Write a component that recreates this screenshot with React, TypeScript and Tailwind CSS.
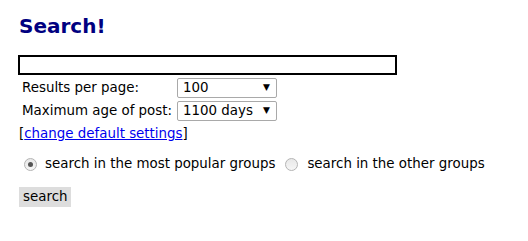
import { useState } from 'react'

const font = { fontFamily: '"DejaVu Sans", Verdana, sans-serif' }

const FakeSelect = ({ value }: { value: string }) => (
  <div className="flex items-center justify-between w-[100px] h-[20px] border border-[#a9a9a9] rounded-[2px] bg-white pl-[5px] pr-[6px] text-[13.4px] text-black">
    <span>{value}</span>
    <span className="text-[9px]">▼</span>
  </div>
)

const Radio = ({ checked, onClick }: { checked: boolean; onClick: () => void }) => (
  <span
    onClick={onClick}
    className="flex items-center justify-center w-[13px] h-[13px] rounded-full border border-[#b4b4b4] bg-gradient-to-b from-[#e8e8e8] to-[#f6f6f6] shrink-0"
  >
    {checked && <span className="w-[5px] h-[5px] rounded-full bg-[#555]" />}
  </span>
)

export const App = () => {
  const [query, setQuery] = useState<string>('')
  const [popular, setPopular] = useState<boolean>(true)

  return (
    <div className="w-[528px] h-[241px] bg-white px-[18px] pt-[14px] text-black" style={font}>
      <h1 className="text-[20px] leading-[24px] font-bold text-[#000080] pl-[1px]">Search!</h1>

      <input
        className="block mt-[17px] w-[379px] h-[20px] border-2 border-black outline-none px-1 text-[13px]"
        value={query}
        onChange={(e) => {
          setQuery(e.target.value)
        }}
      />

      <div className="grid grid-cols-[159px_auto] gap-y-[3px] mt-[3px] text-[13.4px] items-center">
        <span className="pl-[4px]">Results per page:</span>
        <FakeSelect value="100" />
        <span className="pl-[4px]">Maximum age of post:</span>
        <FakeSelect value="1100 days" />
      </div>

      {/* 設定リンク */}
      <p className="mt-[5px] pl-[1px] text-[13.4px] leading-[16px]">
        [<a href="#" className="text-[#0000ee] underline">change default settings</a>]
      </p>

      <div className="flex items-center mt-[14px] text-[13.4px] leading-[16px]">
        <span className="ml-[6px]">
          <Radio checked={popular} onClick={() => setPopular(true)} />
        </span>
        <span className="ml-[8px]">search in the most popular groups</span>
        <span className="ml-[10px]">
          <Radio checked={!popular} onClick={() => setPopular(false)} />
        </span>
        <span className="ml-[9px]">search in the other groups</span>
      </div>

      <button className="block mt-[15px] ml-[1px] h-[20px] px-[4px] bg-[#dddddd] text-[13.4px] leading-[20px]">
        search
      </button>
    </div>
  )
}

export default App
